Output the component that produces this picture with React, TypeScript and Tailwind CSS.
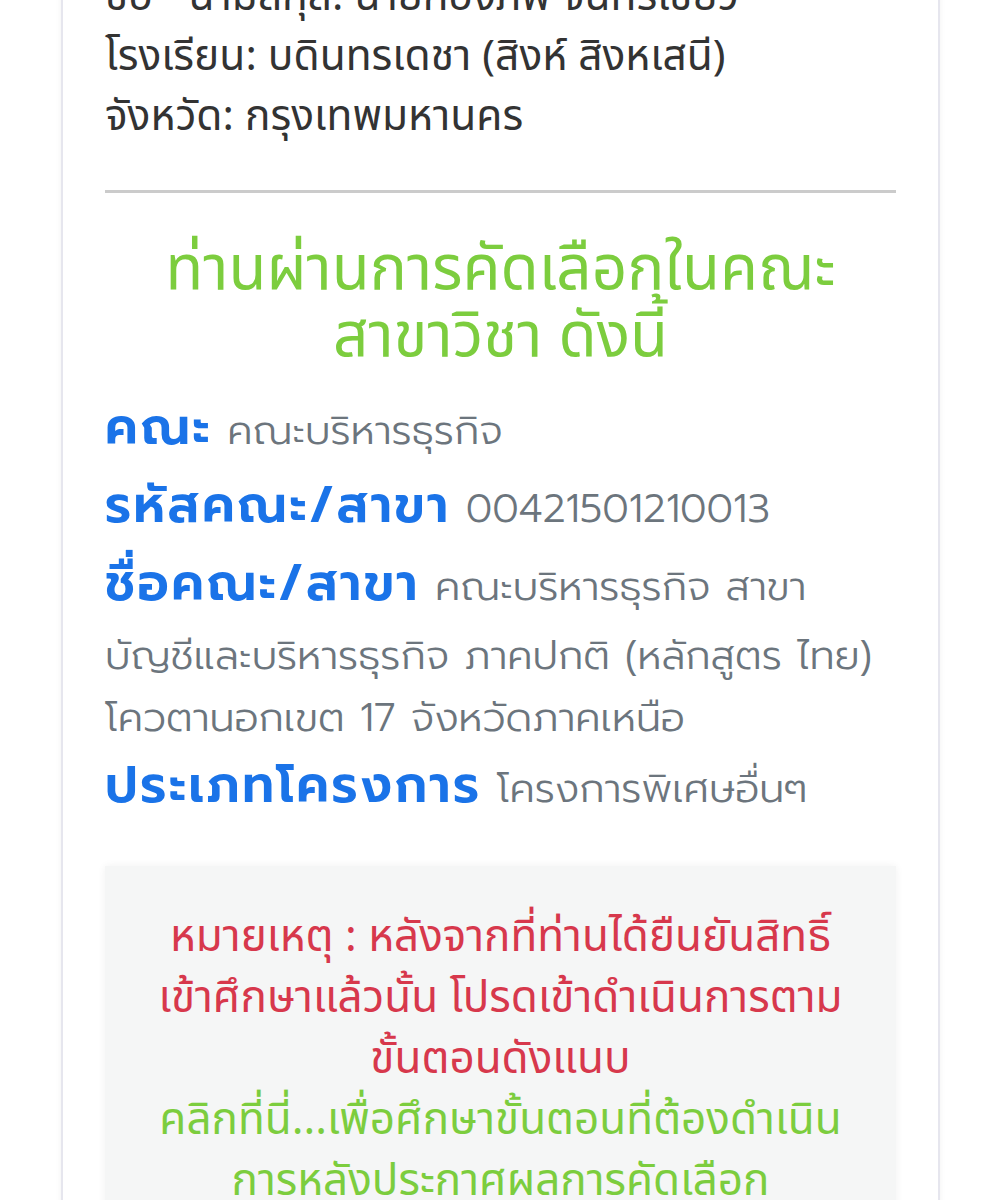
export default function App() {
  const rows: { label: string; value: string }[] = [
    { label: "คณะ", value: "คณะบริหารธุรกิจ" },
    { label: "รหัสคณะ/สาขา", value: "00421501210013" },
    {
      label: "ชื่อคณะ/สาขา",
      value: "คณะบริหารธุรกิจ สาขา บัญชีและบริหารธุรกิจ ภาคปกติ (หลักสูตร ไทย) โควตานอกเขต 17 จังหวัดภาคเหนือ",
    },
    { label: "ประเภทโครงการ", value: "โครงการพิเศษอื่นๆ" },
  ];
  return (
    <div className="min-h-[1200px] overflow-hidden bg-white">
      <div className="mx-[61px] -mt-[33px] border-x-2 border-[#e6e6ee] bg-white px-[42px] pb-10 shadow-[0_0_6px_rgba(0,0,0,0.06)]">
        <div className="font-['Noto_Sans_Thai',sans-serif] text-[42.5px] leading-[60px] text-[#333]">
          <p>ชื่อ - นามสกุล: นายก้องภพ จันทร์เขียว</p>
          <p>โรงเรียน: บดินทรเดชา (สิงห์ สิงหเสนี)</p>
          <p>จังหวัด: กรุงเทพมหานคร</p>
        </div>
        <div className="mt-[43px] h-[3px] bg-[#cbcbcb]" />
        <h2 className="mt-[44px] text-center font-['Noto_Sans_Thai',sans-serif] text-[62px] leading-[67px] text-[#7ccd3e]">
          ท่านผ่านการคัดเลือกในคณะ
          <br />
          สาขาวิชา ดังนี้
        </h2>
        <div className="mt-[24px] font-['Prompt',sans-serif] text-[40px] font-light leading-[62px] text-[#6c757d]">
          {rows.map((r) => (
            <p key={r.label} className="mb-[4px]">
              <span className="inline-block pb-[9px] text-[50px] font-semibold leading-[65px] tracking-[0.05em] text-[#1a73e8]">
                {r.label}
              </span>{" "}
              {r.value}
            </p>
          ))}
        </div>
        <div className="mt-[39px] bg-[#f5f6f6] px-8 pt-[41px] pb-10 text-center font-['Noto_Sans_Thai',sans-serif] text-[44px] leading-[61px] shadow-[0_0_8px_rgba(0,0,0,0.06)]">
          <p className="text-[#d7384c]">
            หมายเหตุ : หลังจากที่ท่านได้ยืนยันสิทธิ์
            <br />
            เข้าศึกษาแล้วนั้น โปรดเข้าดำเนินการตาม
            <br />
            ขั้นตอนดังแนบ
          </p>
          <p className="text-[#7ccd3e]">
            คลิกที่นี่...เพื่อศึกษาขั้นตอนที่ต้องดำเนิน
            <br />
            การหลังประกาศผลการคัดเลือก
          </p>
        </div>
      </div>
    </div>
  );
}
